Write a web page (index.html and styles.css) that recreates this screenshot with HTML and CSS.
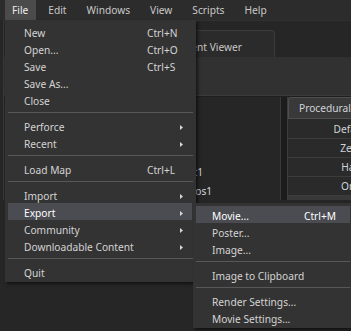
FILE: index.html
```html
<!DOCTYPE html>
<html lang="en">
<head>
    <meta charset="UTF-8">
    <title>File menu</title>
    <link rel="stylesheet" href="styles.css">
</head>
<body>
<div class="menubar">
    <span class="menubar-item active">File</span>
    <span class="menubar-item">Edit</span>
    <span class="menubar-item">Windows</span>
    <span class="menubar-item">View</span>
    <span class="menubar-item">Scripts</span>
    <span class="menubar-item">Help</span>
</div>

<div class="workspace">
    <div class="tabbar">
        <div class="tab">Document Viewer</div>
    </div>
    <div class="toolstrip"></div>
    <div class="panels">
        <div class="outliner">
            <div class="node">Light1</div>
            <div class="node">Photos1</div>
        </div>
        <div class="splitter"></div>
        <div class="props">
            <div class="props-head">Procedural</div>
            <div class="props-row">Default</div>
            <div class="props-row">Zero</div>
            <div class="props-row">Half</div>
            <div class="props-row">One</div>
            <div class="props-foot"></div>
        </div>
    </div>
</div>

<!-- File menu, opened -->
<div class="menu file-menu">
    <div class="item"><span>New</span><span class="key">Ctrl+N</span></div>
    <div class="item"><span>Open...</span><span class="key">Ctrl+O</span></div>
    <div class="item"><span>Save</span><span class="key">Ctrl+S</span></div>
    <div class="item"><span>Save As...</span></div>
    <div class="item"><span>Close</span></div>
    <div class="sep"></div>
    <div class="item"><span>Perforce</span><span></span><svg class="arrow" width="3" height="5"><path d="M0 0L3 2.5L0 5z"/></svg></div>
    <div class="item"><span>Recent</span><span></span><svg class="arrow" width="3" height="5"><path d="M0 0L3 2.5L0 5z"/></svg></div>
    <div class="sep"></div>
    <div class="item"><span>Load Map</span><span class="key">Ctrl+L</span></div>
    <div class="sep"></div>
    <div class="item"><span>Import</span><span></span><svg class="arrow" width="3" height="5"><path d="M0 0L3 2.5L0 5z"/></svg></div>
    <div class="item hover"><span>Export</span><span></span><svg class="arrow" width="3" height="5"><path d="M0 0L3 2.5L0 5z"/></svg></div>
    <div class="item"><span>Community</span><span></span><svg class="arrow" width="3" height="5"><path d="M0 0L3 2.5L0 5z"/></svg></div>
    <div class="item"><span>Downloadable Content</span><span></span><svg class="arrow" width="3" height="5"><path d="M0 0L3 2.5L0 5z"/></svg></div>
    <div class="sep"></div>
    <div class="item"><span>Quit</span></div>
</div>

<!-- Export submenu -->
<div class="menu export-menu">
    <div class="item hover"><span>Movie...</span><span class="key">Ctrl+M</span></div>
    <div class="item"><span>Poster...</span></div>
    <div class="item"><span>Image...</span></div>
    <div class="sep"></div>
    <div class="item"><span>Image to Clipboard</span></div>
    <div class="sep"></div>
    <div class="item"><span>Render Settings...</span></div>
    <div class="item"><span>Movie Settings...</span></div>
</div>
</body>
</html>
```

FILE: styles.css
```css
html, body { margin: 0; height: 100%; }
body { position: relative; overflow: hidden; background: #262626; color: #d2d2d2; font-family: "Noto Sans", "Open Sans", sans-serif; font-size: 10.2px; }

.menubar { display: flex; gap: 5px; height: 20px; padding-left: 5px; background: #2c2c2c; line-height: 19px; color: #c8c8c8; }
.menubar-item { padding: 1px 8px 0 7px; }
.menubar-item.active { background: #4b4b4b; color: #ececec; }

.workspace { border-left: 1px solid #383838; margin-left: 3px; }
.tabbar { height: 37px; padding-left: 132px; box-sizing: border-box; padding-top: 9px; background: #262626; border-top: 1px solid #303030; }
.tab { display: inline-block; height: 27px; box-sizing: border-box; padding: 8px 32px 0 20px; line-height: 17px; color: #c6c6c6; background: #2b2b2b; border: 1px solid #3c3c3c; border-bottom: none; border-radius: 4px 4px 0 0; }
.toolstrip { height: 38px; background: #313131; border-bottom: 1px solid #3b3b3b; }

.panels { display: flex; height: 103px; background: #262626; border-top: 1px solid #1f1f1f; }
.outliner { width: 276px; flex: none; padding-top: 66px; padding-left: 169px; box-sizing: border-box; color: #d0d6e0; }
.node { height: 19px; line-height: 19px; }
.splitter { width: 6px; flex: none; background: #1c1c1c; border-left: 1px solid #393939; }
.props { width: 126px; flex: none; display: flex; flex-direction: column; background: #2a2a2a; border-left: 1px solid #3c3c3c; }
.props-head { height: 22px; line-height: 21px; padding-left: 10px; background: #393939; border: 1px solid #4e4e4e; border-right: none; border-radius: 3px 0 0 0; color: #cfd3d8; box-sizing: border-box; }
.props-row { height: 18px; line-height: 18px; text-align: center; border-bottom: 1px solid #3c3c3c; color: #cfd3d8; }
.props-head + .props-row { margin-top: 1px; }
.props-foot { flex: 1; background: #383838; }

/* drop-down menus lie over the workspace */
.menu { position: absolute; background: #333333; box-shadow: 2px 2px 3px rgba(0, 0, 0, 0.55); }
.file-menu { left: 5px; top: 20px; width: 191px; padding: 3px 0 2px; }
.export-menu { left: 193px; top: 203px; width: 160px; padding: 3px 0 2px; }
.item { display: grid; grid-template-columns: 123px 1fr 12px; align-items: center; height: 14px; padding-top: 3px; line-height: 14px; margin: 0 4px 0 3px; padding-left: 16px; white-space: nowrap; color: #d4d4d4; }
.export-menu .item { grid-template-columns: 92px 1fr; margin: 0 3px; }
.item.hover { background: #4a4c51; color: #ffffff; }
.arrow { fill: #d8d8d8; }
.sep { height: 1px; margin: 4px 3px; background: #585858; }
```
